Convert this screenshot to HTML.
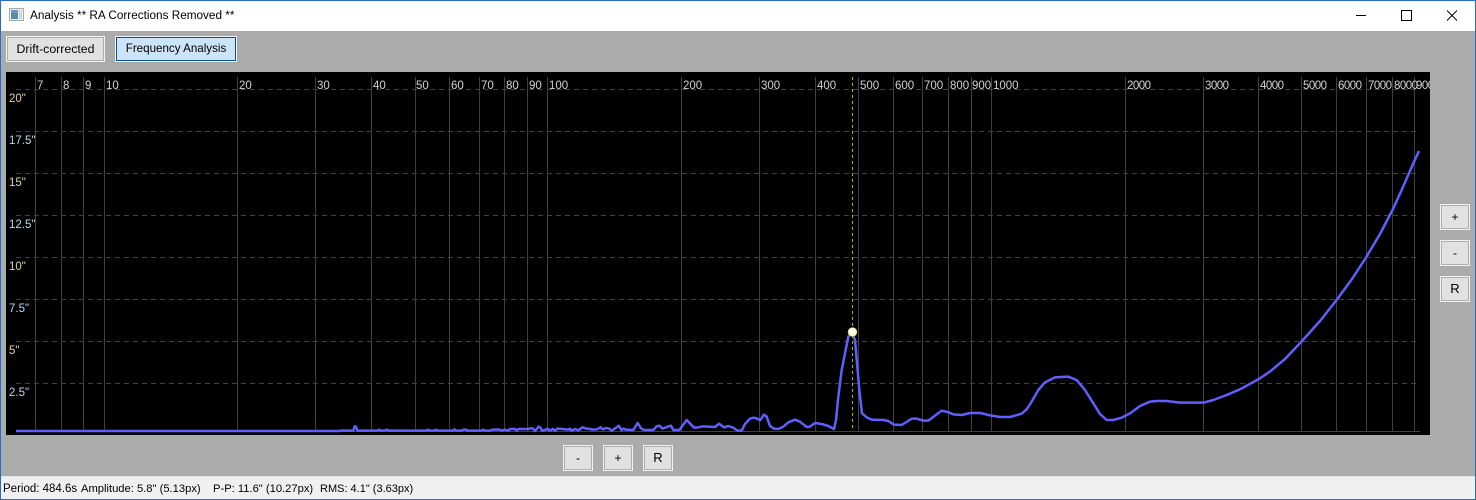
<!DOCTYPE html>
<html><head><meta charset="utf-8">
<style>
html,body{margin:0;padding:0;background:#ababab}
body{position:relative;width:1476px;height:500px;overflow:hidden;font-family:"Liberation Sans",sans-serif;font-size:12px;color:#000}
.abs{position:absolute;white-space:nowrap}
.frame{position:absolute;left:0;top:0;width:1474px;height:498px;border:1px solid #2b6cc4;z-index:10}
.title{position:absolute;left:1px;top:1px;width:1474px;height:30px;background:#fff}
.status{position:absolute;left:1px;top:476px;width:1474px;height:23px;background:#f0f0f0;border-top:1px solid #e4e4e4;box-sizing:border-box}
.btn{position:absolute;box-sizing:border-box;border:1px solid #f2f2f2;height:26px}
.btn div{box-sizing:border-box;height:24px;border:1px solid #adadad;background:#e1e1e1;text-align:center;line-height:22px;font-size:12px}
.btn.sel div{border-color:#005499;background:#cce4f7}
.st{font-size:11.2px;top:482px;line-height:14px}
</style></head><body>
<div class="title"></div>
<svg class="abs" style="left:8px;top:7px" width="18" height="16" viewBox="0 0 18 16">
<rect x="1.5" y="1.5" width="14" height="12" fill="#f0f0f0" stroke="#a9a9a9"/>
<rect x="3" y="3" width="7" height="9" fill="#4f8f9f"/><rect x="3" y="3" width="7" height="3" fill="#6f93c4"/>
<rect x="11" y="3" width="3" height="9" fill="#cfd8d8"/>
</svg>
<div class="abs" style="left:30px;top:9px;line-height:14px;font-size:11.75px">Analysis ** RA Corrections Removed **</div>
<svg class="abs" style="left:1340px;top:0" width="136" height="31" viewBox="0 0 136 31" fill="none" stroke="#000">
<path d="M16 15.5H26"/>
<rect x="61.5" y="10.5" width="10" height="10"/>
<path d="M107 10.5L117 20.5M117 10.5L107 20.5"/>
</svg>

<div class="btn" style="left:6px;top:36px;width:99px"><div style="font-size:12.3px">Drift-corrected</div></div>
<div class="btn sel" style="left:115px;top:36px;width:122px"><div style="font-size:11.6px">Frequency Analysis</div></div>

<svg class="abs" style="left:6px;top:72px" width="1424" height="363" viewBox="6 72 1424 363" font-family="Liberation Sans" font-size="11.5">
<rect x="6" y="72" width="1424" height="363" fill="#000"/>
<g stroke="#404040" stroke-dasharray="5 4" shape-rendering="crispEdges">
<path d="M16 89.5H1420M16 131.5H1420M16 173.5H1420M16 215.5H1420M16 257.5H1420M16 299.5H1420M16 341.5H1420M16 383.5H1420"/>
</g>
<path stroke="#404040" fill="none" shape-rendering="crispEdges" d="M16 431.5H1420M35.5 77V431M61.5 77V431M83.5 77V431M104.5 77V431M237.5 77V431M315.5 77V431M371.5 77V431M415.5 77V431M449.5 77V431M479.5 77V431M504.5 77V431M527.5 77V431M547.5 77V431M681.5 77V431M759.5 77V431M815.5 77V431M858.5 77V431M893.5 77V431M922.5 77V431M948.5 77V431M971.5 77V431M991.5 77V431M1125.5 77V431M1203.5 77V431M1258.5 77V431M1301.5 77V431M1336.5 77V431M1366.5 77V431M1392.5 77V431M1414.5 77V431"/>
<g fill="#d2d2d2">
<text x="37" y="89">7</text><text x="63" y="89">8</text><text x="85" y="89">9</text><text x="106" y="89">10</text>
<text x="239" y="89">20</text><text x="317" y="89">30</text><text x="373" y="89">40</text><text x="416" y="89">50</text><text x="451" y="89">60</text><text x="481" y="89">70</text><text x="506" y="89">80</text><text x="529" y="89">90</text><text x="549" y="89">100</text>
<text x="683" y="89">200</text><text x="761" y="89">300</text><text x="817" y="89">400</text><text x="860" y="89">500</text><text x="895" y="89">600</text><text x="924" y="89">700</text><text x="950" y="89">800</text><text x="972" y="89">900</text><text x="993" y="89">1000</text>
<text x="1127" y="89" textLength="24">2000</text><text x="1205" y="89" textLength="24">3000</text><text x="1260" y="89" textLength="24">4000</text><text x="1303" y="89" textLength="24">5000</text><text x="1338" y="89" textLength="24">6000</text><text x="1368" y="89" textLength="24">7000</text><text x="1394" y="89" textLength="24">8000</text><text x="1416" y="89" textLength="24">9000</text>
</g>
<g>
<text x="9" y="102" fill="#e0cfae">20"</text>
<text x="9" y="144" fill="#bcd6ec">17.5"</text>
<text x="9" y="186" fill="#e0cfae">15"</text>
<text x="9" y="228" fill="#bcd6ec">12.5"</text>
<text x="9" y="270" fill="#e0cfae">10"</text>
<text x="9" y="312" fill="#bcd6ec">7.5"</text>
<text x="9" y="354" fill="#e0cfae">5"</text>
<text x="9" y="396" fill="#bcd6ec">2.5"</text>
</g>
<path d="M852.5 77V431" stroke="#b4b400" stroke-dasharray="3 3" shape-rendering="crispEdges"/>
<g fill="none" stroke="#5f5fff" stroke-linejoin="round">
<path stroke-width="2.4" d="M16 431H340"/>
<polyline stroke-width="7.5" transform="translate(340 400) scale(.33333)" points="0,92 40,92 44,79 48,80 52,92 115,92 118,89 122,92 135,92 140,89 146,92 260,92 263,89 267,92 285,92 288,89 292,92 340,92 343,88 347,92 365,92 370,89 378,89 382,92 425,92 430,89 435,92 450,92 458,89 480,89 485,92 495,89 505,92 510,87 525,87 530,92 535,87 565,87 572,85 578,85 585,93 592,85 598,77"/>
<polyline stroke-width="7.5" transform="translate(540 320) scale(.33333)" points="0,320 6,332 15,330 22,326 30,332 38,327 45,332 52,326 68,327 85,329 90,326 95,332 105,327 115,331 128,322 140,326 150,327 158,329 170,328 182,322 188,328 198,324 208,326 215,332 230,322 236,317 245,330 250,326 258,329 280,330 293,309 303,325 312,330 340,330 350,319 358,317 368,326 380,321 393,317 400,330 418,330 440,300 462,323 475,322 490,319 525,321 537,311 552,322 565,318 580,323 592,332 605,332 615,312 630,296 640,293 650,295 660,301 672,284 680,290 690,318 702,326 715,327 730,320 745,307 765,299 780,305 800,321 810,320 825,309 845,312 865,318 882,327 888,300 895,230 905,150 915,100 925,50 935,37 945,60 952,140 958,210 966,280 980,292 995,299 1030,300 1045,303 1062,314 1085,315 1115,296 1130,296 1150,302 1165,302 1185,287 1200,275"/>
<polyline stroke-width="7.5" transform="translate(930 340) scale(.33333)" points="30,213 40,213 55,217 70,223 95,225 120,219 150,219 180,226 210,231 240,231 275,221 290,208 305,185 325,150 345,127 375,112 415,110 440,120 465,150 490,190 510,222 530,240 550,240 575,233 600,220 630,198 660,185 680,183 710,183 750,188 820,188 850,180 890,165 930,148 990,115"/>
<polyline stroke-width="2.5" points="1260,378.3 1270,371.5 1285,359 1302,341 1320,321 1337,299.5 1352,279 1366,257.5 1380,234 1393,209 1403,187 1413,164 1419,151"/>
</g>
<circle cx="852.5" cy="332" r="4.5" fill="#ffffe8" stroke="#b4b400" stroke-width=".6"/>
</svg>

<div class="btn" style="left:563px;top:445px;width:30px"><div>-</div></div>
<div class="btn" style="left:603px;top:445px;width:30px"><div>+</div></div>
<div class="btn" style="left:643px;top:445px;width:30px"><div style="font-size:13px">R</div></div>
<div class="btn" style="left:1440px;top:204px;width:30px"><div>+</div></div>
<div class="btn" style="left:1440px;top:240px;width:30px"><div>-</div></div>
<div class="btn" style="left:1440px;top:276px;width:30px"><div style="font-size:13px">R</div></div>

<div class="status"></div>
<div class="abs st" style="left:3px;font-size:11.5px">Period: 484.6s</div>
<div class="abs st" style="left:81px">Amplitude: 5.8" (5.13px)</div>
<div class="abs st" style="left:213px">P-P: 11.6" (10.27px)</div>
<div class="abs st" style="left:320px;font-size:11px">RMS: 4.1" (3.63px)</div>
<div class="frame"></div>
</body></html>
